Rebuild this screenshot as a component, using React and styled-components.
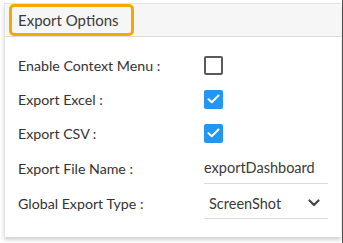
import React, { useState } from 'react'
import styled, { createGlobalStyle } from 'styled-components'

const GlobalStyle = createGlobalStyle`
  html, body {
    margin: 0;
    padding: 0;
    background: #ffffff;
  }
  body {
    font-family: Lato, "Noto Sans", sans-serif;
    color: #333333;
  }
`

const Page = styled.div`
  width: 343px;
  height: 243px;
  padding: 3px 1px 0 4px;
  box-sizing: border-box;
  border-right: 1px solid #555;
`

const Panel = styled.div`
  height: 234px;
  box-sizing: border-box;
  border-left: 1px solid #e2e5e8;
  border-top: 1px solid #e2e5e8;
  background: #fff;
  box-shadow: 0 3px 4px rgba(0, 0, 0, 0.18);
  display: flex;
  flex-direction: column;
`

const Header = styled.div`
  height: 33px;
  box-sizing: border-box;
  background: #f6f6f6;
  border-bottom: 1px solid #dcdcdc;
  padding-left: 4px;
  display: flex;
  align-items: stretch;
`

const TitleBox = styled.div`
  width: 125px;
  box-sizing: border-box;
  border: 3px solid #f5a800;
  border-radius: 5px;
  display: flex;
  align-items: center;
  padding-left: 6px;
  font-size: 15px;
  color: #3b3b3b;
`

const Body = styled.div`
  padding: 11px 13px 0 13px;
  display: flex;
  flex-direction: column;
`

const Row = styled.div`
  display: grid;
  grid-template-columns: 186px 124px;
  align-items: center;
  height: ${p => p.h || 34}px;
`

const Label = styled.div`
  font-size: 14.2px;
  color: #333;
`

const Box = styled.div`
  width: 19px;
  height: 19px;
  box-sizing: border-box;
  border-radius: 2px;
  border: ${p => (p.checked ? 'none' : '2px solid #5a5a5a')};
  background: ${p => (p.checked ? '#2196f3' : '#fff')};
  display: flex;
  align-items: center;
  justify-content: center;
  cursor: pointer;
`

const Field = styled.div`
  height: 31px;
  box-sizing: border-box;
  border-bottom: 1px solid #dcdcdc;
  display: flex;
  align-items: center;
  justify-content: space-between;
  padding: 0 8px 0 0;
  font-size: 14.5px;
  color: #3a3a3a;
`

const SelectValue = styled.span`
  padding-left: 5px;
`

const Checkbox = ({ checked, onToggle }) => (
  <Box checked={checked} onClick={onToggle}>
    {checked && (
      <svg width="13" height="10" viewBox="0 0 13 10">
        <path d="M1.5 5.2 L4.8 8.3 L11.5 1.5" fill="none" stroke="#fff" strokeWidth="2" strokeLinecap="round" strokeLinejoin="round" />
      </svg>
    )}
  </Box>
)

const Chevron = () => (
  <svg width="12" height="8" viewBox="0 0 12 8">
    <path d="M1.5 1.5 L6 6 L10.5 1.5" fill="none" stroke="#444" strokeWidth="2.2" strokeLinecap="round" strokeLinejoin="round" />
  </svg>
)

export default function App() {
  const [opts, setOpts] = useState({ context: false, excel: true, csv: true })
  const toggle = k => setOpts({ ...opts, [k]: !opts[k] })

  return (
    <Page>
      <GlobalStyle />
      <Panel>
        <Header>
          <TitleBox>Export Options</TitleBox>
        </Header>
        <Body>
          <Row>
            <Label>Enable Context Menu :</Label>
            <Checkbox checked={opts.context} onToggle={() => toggle('context')} />
          </Row>
          <Row>
            <Label>Export Excel :</Label>
            <Checkbox checked={opts.excel} onToggle={() => toggle('excel')} />
          </Row>
          <Row>
            <Label>Export CSV :</Label>
            <Checkbox checked={opts.csv} onToggle={() => toggle('csv')} />
          </Row>
          <Row h={36}>
            <Label>Export File Name :</Label>
            <Field>exportDashboard</Field>
          </Row>
          <Row h={35}>
            <Label>Global Export Type :</Label>
            <Field>
              <SelectValue>ScreenShot</SelectValue>
              <Chevron />
            </Field>
          </Row>
        </Body>
      </Panel>
    </Page>
  )
}
